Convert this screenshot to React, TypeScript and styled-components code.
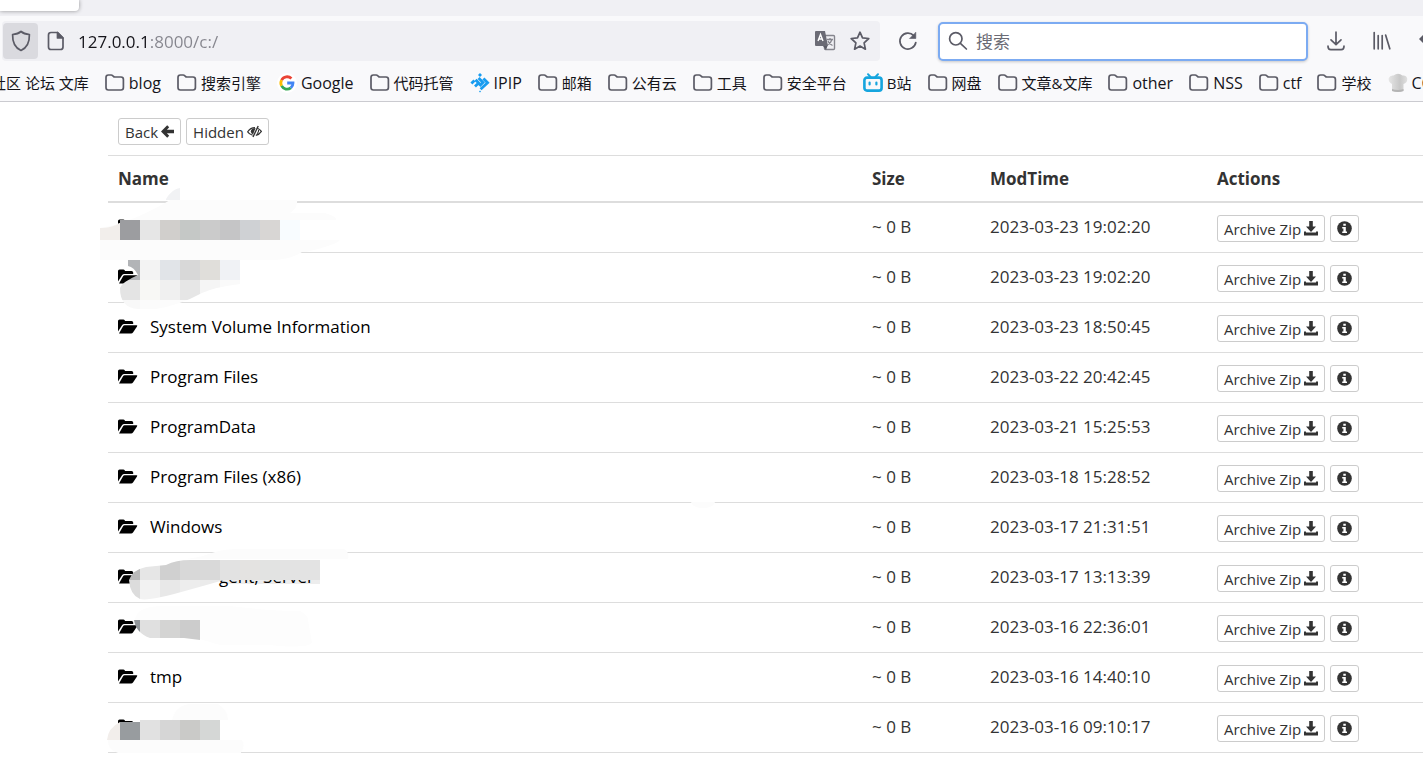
import React from 'react';
import styled, { createGlobalStyle } from 'styled-components';

const GlobalStyle = createGlobalStyle`
  * { box-sizing: border-box; }
  body {
    margin: 0;
    background: #fff;
    overflow: hidden;
    font-family: "Open Sans", "Noto Sans CJK SC", sans-serif;
    color: #333;
  }
  button, input { font: inherit; color: inherit; }
  svg { display: block; flex: none; }
`;

/* ---------- browser chrome ---------- */

const TabStrip = styled.div`
  height: 16px;
  background: #f0f0f4;
  overflow: hidden;
`;

const ActiveTab = styled.div`
  width: 79px;
  height: 11px;
  background: #fff;
  border-radius: 0 0 4px 0;
  box-shadow: 0 0 4px rgba(0, 0, 0, 0.4);
`;

const Toolbar = styled.div`
  display: flex;
  align-items: center;
  height: 50px;
  padding-left: 2px;
  background: #f9f9fb;
  overflow: hidden;
  color: #5b5b66;
`;

const AddressBar = styled.div`
  display: flex;
  flex: 1;
  align-items: center;
  height: 40px;
  padding: 0 3px 0 1px;
  border-radius: 4px;
  background: #f0f0f4;
`;

const IconButton = styled.button<{ $width: number; $active?: boolean }>`
  display: flex;
  flex: none;
  align-items: center;
  justify-content: center;
  width: ${(p) => p.$width}px;
  height: 36px;
  padding: 0;
  border: 0;
  border-radius: 4px;
  background: ${(p) => (p.$active ? '#dadadf' : 'transparent')};
`;

const AddressInput = styled.input`
  flex: 1;
  min-width: 0;
  height: 30px;
  margin-left: 4px;
  padding: 0;
  border: 0;
  outline: 0;
  font-size: 17px;
  background: linear-gradient(90deg, #15141a 73px, #85858d 73px);
  background-clip: text;
  -webkit-text-fill-color: transparent;
`;

const SearchBox = styled.label`
  display: flex;
  flex: none;
  align-items: center;
  gap: 8px;
  width: 370px;
  height: 39px;
  margin-left: 2px;
  padding: 0 8px;
  border: 2px solid #7cabf2;
  border-radius: 5px;
  background: #fff;
  box-shadow: 0 1px 3px rgba(0, 0, 0, 0.2);
`;

const SearchInput = styled.input`
  flex: 1;
  min-width: 0;
  padding: 0;
  border: 0;
  outline: 0;
  background: transparent;
  font-size: 17px;
  &::placeholder { color: #6b6b75; opacity: 1; }
`;

const ToolbarActions = styled.div`
  display: flex;
  flex: none;
  width: 115px;
  padding-left: 5px;
  overflow: hidden;
`;

const BookmarkBar = styled.nav`
  display: flex;
  align-items: center;
  gap: 16px;
  height: 36px;
  padding: 0 0 2px 90px;
  border-bottom: 1px solid #cbcbd0;
  background: #f9f9fb;
  overflow: hidden;
`;

const Bookmark = styled.a<{ $clipped?: boolean; $latin?: boolean }>`
  display: flex;
  flex: none;
  align-items: center;
  gap: 4px;
  margin-left: ${(p) => (p.$clipped ? '-99px' : '0')};
  color: #15141a;
  font-size: ${(p) => (p.$latin ? '16px' : '15px')};
  line-height: 20px;
  text-decoration: none;
  white-space: nowrap;
`;

/* ---------- file listing ---------- */

const Listing = styled.main`
  margin-left: 108px;
`;

const Controls = styled.div`
  display: flex;
  gap: 5px;
  padding: 16px 10px 10px;
  border-bottom: 1px solid #ddd;
`;

const SmallButton = styled.button`
  display: inline-flex;
  align-items: center;
  gap: 3px;
  height: 27px;
  padding: 0 6px;
  border: 1px solid #ccc;
  border-radius: 3px;
  background: #fff;
  font-size: 15px;
  line-height: 20px;
  white-space: nowrap;
`;

const FileTable = styled.table`
  width: 100%;
  table-layout: fixed;
  border-collapse: separate;
  border-spacing: 0;
  font-size: 17px;
  line-height: 24px;
`;

const HeadCell = styled.th<{ $width?: number }>`
  width: ${(p) => (p.$width ? `${p.$width}px` : 'auto')};
  height: 47px;
  padding: 0 10px;
  border-bottom: 2px solid #ddd;
  text-align: left;
  font-weight: 700;
`;

const Cell = styled.td`
  position: relative;
  height: 50px;
  padding: 0 10px 2px;
  border-bottom: 1px solid #ddd;
  white-space: nowrap;
`;

const FileLink = styled.a<{ $indent?: number }>`
  display: flex;
  align-items: center;
  gap: ${(p) => p.$indent ?? 12}px;
  color: #000;
  text-decoration: none;
`;

const RowActions = styled.div`
  display: flex;
  gap: 5px;
  padding-top: 4px;
`;

const Mosaic = styled.svg`
  position: absolute;
  top: 0;
  left: -8px;
  overflow: visible;
  pointer-events: none;
`;

/* ---------- icons ---------- */

const stroke = {
  fill: 'none',
  stroke: '#5b5b66',
  strokeWidth: 1.7,
  strokeLinecap: 'round' as const,
  strokeLinejoin: 'round' as const,
};

const ShieldIcon = () => (
  <svg width="20" height="22" viewBox="0 0 20 22" {...stroke}>
    <path d="M10 1.5 C8 3.3 4.8 4.2 1.6 4.5 C1.4 11 3.5 17.5 10 20.5 C16.5 17.5 18.6 11 18.4 4.5 C15.2 4.2 12 3.3 10 1.5 Z" />
  </svg>
);

const PageIcon = () => (
  <svg width="18" height="20" viewBox="0 0 18 20" {...stroke}>
    <path d="M4 1.5 H10.5 L16 7 V16 Q16 18.5 13.5 18.5 H4 Q1.5 18.5 1.5 16 V4 Q1.5 1.5 4 1.5 Z" />
    <path d="M10.5 1.5 V7 H16 Z" fill="#5b5b66" />
  </svg>
);

const TranslateIcon = () => (
  <svg width="22" height="22" viewBox="0 0 22 22">
    <rect x="10.5" y="5.5" width="10" height="14" rx="1" fill="#f0f0f4" stroke="#85858d" strokeWidth="1.4" />
    <path d="M13 9.5 H19 M16 8 V9.5 M18 9.5 Q17 13 13.5 15 M14 11 Q15 14 18.5 15.5" fill="none" stroke="#85858d" strokeWidth="1.3" />
    <path d="M2 1 H11 L14 16 H2 Q1 16 1 15 V2 Q1 1 2 1 Z" fill="#6b6b75" />
    <path d="M9 16 L12 20 L13.5 16 Z" fill="#5b5b66" />
    <path d="M4 11 L6.5 4.5 L9 11 M5 9 H8" fill="none" stroke="#fff" strokeWidth="1.4" />
  </svg>
);

const StarIcon = () => (
  <svg width="20" height="20" viewBox="0 0 20 20" {...stroke}>
    <path d="M10 1.2 L12.5 6.9 L18.8 7.5 L14.1 11.8 L15.4 18.2 L10 15 L4.6 18.2 L5.9 11.8 L1.2 7.5 L7.5 6.9 Z" />
  </svg>
);

const ReloadIcon = () => (
  <svg width="20" height="20" viewBox="0 0 20 20" {...stroke}>
    <path d="M15.8 4.6 A8 8 0 1 0 17.8 11.5" />
    <path d="M17.8 1.5 V7.5 H11.8 Z" fill="#5b5b66" strokeWidth="0.6" />
  </svg>
);

const SearchIcon = () => (
  <svg width="20" height="20" viewBox="0 0 20 20" {...stroke}>
    <circle cx="7.8" cy="7.8" r="6.2" />
    <path d="M12.4 12.4 L18.4 18" />
  </svg>
);

const DownloadIcon = () => (
  <svg width="18" height="20" viewBox="0 0 18 20" {...stroke}>
    <path d="M9 1.2 V13.5 M4 8.8 L9 13.6 L14 8.8 M1 15.2 Q1 18.6 3.8 18.6 H14.2 Q17 18.6 17 15.2" />
  </svg>
);

const LibraryIcon = () => (
  <svg width="18" height="20" viewBox="0 0 18 20" {...stroke}>
    <path d="M1.2 1.5 V17.8 M5.2 4.5 V17.8 M9.2 4.5 V17.8 M12.6 4 L16.8 17.8" />
  </svg>
);

const MoreIcon = () => (
  <svg width="4" height="16" viewBox="0 0 4 16">
    <path d="M0 6 L4 2 V10 Z" fill="#5b5b66" />
  </svg>
);

const BookmarkFolder = () => (
  <svg width="20" height="18" viewBox="0 0 20 18" {...stroke}>
    <path d="M1 3.4 Q1 1 3.4 1 H6.2 Q7 1 7.6 1.6 L9.2 3 H16 Q18.4 3 18.4 5.4 V13.6 Q18.4 16 16 16 H3.4 Q1 16 1 13.6 Z" />
  </svg>
);

const GoogleIcon = () => (
  <svg width="20" height="20" viewBox="0 0 20 20">
    <circle cx="10" cy="10" r="10" fill="#fff" />
    <g fill="none" strokeWidth="2.8">
      <path d="M14.4 5.6 A6.1 6.1 0 0 0 4.6 7.1" stroke="#ea4335" />
      <path d="M4.6 7.1 A6.1 6.1 0 0 0 4.6 12.9" stroke="#fbbc05" />
      <path d="M4.6 12.9 A6.1 6.1 0 0 0 13.8 14.8" stroke="#34a853" />
      <path d="M13.8 14.8 A6.1 6.1 0 0 0 16 10 H10.2" stroke="#4285f4" />
    </g>
  </svg>
);

const IpipIcon = () => (
  <svg width="20" height="20" viewBox="0 0 20 20" fill="#189cf0">
    <path d="M10 0 L12 2 L10 4 L8 2 Z M10 17.6 L11 18.6 L10 19.6 L9 18.6 Z" />
    <path
      d="M1.4 10.6 L4.4 7.6 M5 13.4 L8.6 10 L5.6 6.8 M8.6 5 L13 9.4 L9.4 13 M13.4 5.6 L17.6 9.8 L10.6 16.2"
      fill="none"
      stroke="#189cf0"
      strokeWidth="2.8"
    />
  </svg>
);

const BiliIcon = () => (
  <svg width="20" height="20" viewBox="0 0 20 20" fill="none" stroke="#16a5de" strokeLinecap="round">
    <path d="M5 1.2 L7.5 4 M15 1.2 L12.5 4" strokeWidth="2" />
    <rect x="1.4" y="4.6" width="17.2" height="13" rx="2.6" strokeWidth="2.6" />
    <path d="M6.6 9.6 V11.4 M13.4 9.6 V11.4" strokeWidth="2.2" />
  </svg>
);

const ChefIcon = () => (
  <svg width="20" height="20" viewBox="0 0 20 20">
    <defs>
      <linearGradient id="hat">
        <stop offset="0" stopColor="#e6e6e6" />
        <stop offset="0.6" stopColor="#c8c8c8" />
        <stop offset="1" stopColor="#e0e0e0" />
      </linearGradient>
    </defs>
    <path d="M4 18 V11 Q0 9 .8 5 Q2 2 5.5 2.5 Q10 -1 14.5 2.5 Q18.5 2 19.2 5.5 Q19.6 10 15.5 11 V18 Q10 20 4 18 Z" fill="url(#hat)" />
    <path d="M4 16 Q10 18 15.5 16 V18 Q10 20 4 18 Z" fill="#b4b4b4" />
  </svg>
);

const ArrowLeftIcon = () => (
  <svg width="13" height="13" viewBox="0 0 13 13" fill="#333">
    <path d="M0 6.5 L6.2 .3 L8.2 2.3 L5.9 4.8 H13 V8.2 H5.9 L8.2 10.7 L6.2 12.7 Z" />
  </svg>
);

const EyeCloseIcon = () => (
  <svg width="15" height="13" viewBox="0 0 15 13" fill="none" stroke="#333">
    <path d="M5.6 10.2 Q2.3 9.2 .7 6.8 Q3.4 2.6 8 2.6 M10.4 3.2 Q13 4.4 14.4 6.4 Q12.4 9.6 8.8 10.4" strokeWidth="1.2" />
    <path d="M8.6 3 Q4 3.2 3.8 6.4 Q3.9 8.4 6 9.4 Z" fill="#333" stroke="none" />
    <path d="M11.2 1 L6 12" strokeWidth="1.4" />
    <path d="M11.6 5 Q11.8 7.4 10 8.8" strokeWidth="1.1" />
  </svg>
);

const SaveIcon = () => (
  <svg width="14" height="15" viewBox="0 0 14 15" fill="#333">
    <path d="M5.2 0 H8.8 V5.6 H12 L7 11 L2 5.6 H5.2 Z" />
    <path d="M0 10.4 H2 V11.6 H12 V10.4 H14 V14.6 H0 Z" />
  </svg>
);

const InfoIcon = () => (
  <svg width="15" height="15" viewBox="0 0 15 15">
    <circle cx="7.5" cy="7.5" r="7.3" fill="#333" />
    <path d="M6.3 2.8 H8.8 V4.8 H6.3 Z M5.2 6 H8.8 V10.4 H10 V12 H5.2 V10.4 H6.4 V7.5 H5.2 Z" fill="#fff" />
  </svg>
);

const FolderOpenIcon = () => (
  <svg width="20" height="15" viewBox="0 0 20 15" fill="#000">
    <path d="M0 12.6 V2 Q0 .4 1.6 .4 H5.4 Q7 .4 7 2 H13.6 Q15.2 2 15.2 3.6 V5 H6.2 Q5 5 4.2 6 Z" />
    <path d="M1 14.4 L5.2 7 Q5.7 6.2 6.6 6.2 H18.6 Q19.8 6.2 19 7.4 L15 13.4 Q14.3 14.4 13.2 14.4 Z" />
  </svg>
);

/* ---------- censored names ---------- */

const Tiles = ({ x, y, h, colors }: { x: number; y: number; h: number; colors: string[] }) => (
  <>
    {colors.map((c, i) => (
      <rect key={i} x={x + i * 20} y={y} width="20" height={h} fill={c} shapeRendering="crispEdges" />
    ))}
  </>
);

const masks: Record<string, React.ReactNode> = {
  first: (
    <>
      <path d="M66 -4 Q72 -14 80 -15 V-3 H66 Z" fill="#f1f2f4" />
      <path d="M0 25 Q30 20 65 0 L70 -3 H197 Q198 5 190 10 H225 Q238 14 236 17 H200 V37 H240 Q236 42 206 49 H202 Q190 57 170 57 H0 Z" fill="#fcfcfc" />
      <path d="M0 37 V25 Q12 25 20 20 V37 Z" fill="#f2eeeb" />
      <Tiles x={20} y={17} h={20} colors={['#9c9da0', '#e6e6e6', '#d1cfcc', '#c5c8c6', '#cbcbcb', '#c5c5c6', '#cfd1d4', '#d8d6d4', '#f8fcff']} />
    </>
  ),
  second: (
    <>
      <clipPath id="second">
        <path d="M28 7 H140 V31 Q115 34 102 40 Q80 52 56 56 H38 Q20 55 20 35 Q22 29 38 22 Q34 14 28 13 Z" />
      </clipPath>
      <g clipPath="url(#second)">
        <Tiles x={20} y={7} h={20} colors={['#b2b4b7', '#f3f3f3', '#e1e4e8', '#d8d8d8', '#e0deda', '#f0f2f5']} />
        <Tiles x={20} y={27} h={20} colors={['#e4e4e4', '#f8f8f5', '#f0f0f0', '#e6e6e6', '#f5f5f5', '#fafafa']} />
        <Tiles x={20} y={47} h={10} colors={['#f8f8f8', '#fbfbfb', '#fcfcfc', '#fcfcfc']} />
      </g>
    </>
  ),
  smudge: <path d="M591 49 H615 Q613 55 603 55 Q593 55 591 49 Z" fill="#fcfcfc" />,
  agent: (
    <>
      <path d="M112 0 Q122 -4 140 -4 H244 Q250 0 248 6 H80 Q96 6 112 0 Z" fill="#fcfcfc" />
      <clipPath id="agent">
        <path d="M29 27 Q32 17 46 14 L66 12 Q76 7 90 7 H220 V27 H124 Q96 35 74 41 Q48 48 40 46 Q30 42 29 27 Z" />
      </clipPath>
      <g clipPath="url(#agent)">
        <Tiles x={20} y={7} h={20} colors={['#b9b9b9', '#e6e6e6', '#d0d0d0', '#d8d8d8', '#d9d9d9', '#e2e2e2', '#e4e3e1', '#e2e3e2', '#e3e3e3', '#e3e3e3']} />
        <Tiles x={20} y={27} h={20} colors={['#dcdcdc', '#f2f2f2', '#e8e8e8', '#ededed', '#ebebeb', '#ededed']} />
      </g>
      <rect x="120" y="27" width="100" height="4" fill="#000" fillOpacity="0.07" />
    </>
  ),
  short: (
    <>
      <path d="M35 17 Q36 4 60 3 H130 Q170 8 200 8 Q208 12 208 17 L212 40 Q205 46 170 42 H120 Z" fill="#fdfdfd" />
      <clipPath id="short">
        <path d="M34 17 H100 V37 L84 35 H50 Q36 30 34 17 Z" />
      </clipPath>
      <g clipPath="url(#short)">
        <Tiles x={20} y={17} h={20} colors={['#91969a', '#e0e0e0', '#d4d4d3', '#cccccc']} />
      </g>
    </>
  ),
  last: (
    <>
      <path d="M8 37 H142 Q146 44 140 51 H130 Q90 54 60 50 H18 Q7 46 8 37 Z M72 17 Q76 2 90 1 H118 Q128 7 128 17 Z" fill="#fcfcfc" />
      <path d="M7 37 Q8 25 20 19 V37 Z" fill="#f2eeeb" />
      <rect x="20" y="19" width="20" height="18" fill="#989c9f" />
      <Tiles x={40} y={17} h={20} colors={['#e1e1e1', '#d6d6d6', '#cacac8', '#d5d7d6']} />
    </>
  ),
};

/* ---------- data ---------- */

const bookmarks: { label: string; icon?: React.ReactNode; clipped?: boolean; latin?: boolean }[] = [
  { label: '社区 论坛 文库', icon: null, clipped: true },
  { label: 'blog', latin: true },
  { label: '搜索引擎' },
  { label: 'Google', icon: <GoogleIcon />, latin: true },
  { label: '代码托管' },
  { label: 'IPIP', icon: <IpipIcon />, latin: true },
  { label: '邮箱' },
  { label: '公有云' },
  { label: '工具' },
  { label: '安全平台' },
  { label: 'B站', icon: <BiliIcon /> },
  { label: '网盘' },
  { label: '文章&文库' },
  { label: 'other', latin: true },
  { label: 'NSS', latin: true },
  { label: 'ctf', latin: true },
  { label: '学校' },
  { label: 'CC', icon: <ChefIcon />, latin: true },
];

const files: { name: string; time: string; mask?: string; indent?: number }[] = [
  { name: '', time: '2023-03-23 19:02:20', mask: 'first' },
  { name: '', time: '2023-03-23 19:02:20', mask: 'second' },
  { name: 'System Volume Information', time: '2023-03-23 18:50:45' },
  { name: 'Program Files', time: '2023-03-22 20:42:45' },
  { name: 'ProgramData', time: '2023-03-21 15:25:53' },
  { name: 'Program Files (x86)', time: '2023-03-18 15:28:52', mask: 'smudge' },
  { name: 'Windows', time: '2023-03-17 21:31:51' },
  { name: 'gent, Server', time: '2023-03-17 13:13:39', mask: 'agent', indent: 81 },
  { name: '', time: '2023-03-16 22:36:01', mask: 'short' },
  { name: 'tmp', time: '2023-03-16 14:40:10' },
  { name: '', time: '2023-03-16 09:10:17', mask: 'last' },
];

export default function App() {
  return (
    <>
      <GlobalStyle />
      <header>
        <TabStrip>
          <ActiveTab />
        </TabStrip>
        <Toolbar>
          <AddressBar>
            <IconButton $width={35} $active aria-label="Tracking protection"><ShieldIcon /></IconButton>
            <IconButton $width={36} aria-label="Site information"><PageIcon /></IconButton>
            <AddressInput aria-label="Address" defaultValue="127.0.0.1:8000/c:/" />
            <IconButton $width={36} aria-label="Translate page"><TranslateIcon /></IconButton>
            <IconButton $width={34} aria-label="Bookmark page"><StarIcon /></IconButton>
          </AddressBar>
          <IconButton $width={56} aria-label="Reload"><ReloadIcon /></IconButton>
          <SearchBox>
            <SearchIcon />
            <SearchInput aria-label="搜索" placeholder="搜索" />
          </SearchBox>
          <ToolbarActions>
            <IconButton $width={46} aria-label="Downloads"><DownloadIcon /></IconButton>
            <IconButton $width={46} aria-label="Library"><LibraryIcon /></IconButton>
            <IconButton $width={32} aria-label="More tools"><MoreIcon /></IconButton>
          </ToolbarActions>
        </Toolbar>
        <BookmarkBar aria-label="Bookmarks">
          {bookmarks.map((b) => (
            <Bookmark key={b.label} href="#" $clipped={b.clipped} $latin={b.latin}>
              {b.icon === undefined ? <BookmarkFolder /> : b.icon}
              {b.label}
            </Bookmark>
          ))}
        </BookmarkBar>
      </header>
      <Listing>
        <Controls>
          <SmallButton>Back <ArrowLeftIcon /></SmallButton>
          <SmallButton>Hidden <EyeCloseIcon /></SmallButton>
        </Controls>
        <FileTable>
          <thead>
            <tr>
              <HeadCell>Name</HeadCell>
              <HeadCell $width={118}>Size</HeadCell>
              <HeadCell $width={227}>ModTime</HeadCell>
              <HeadCell $width={216}>Actions</HeadCell>
            </tr>
          </thead>
          <tbody>
            {files.map((f, i) => (
              <tr key={i}>
                <Cell>
                  <FileLink href="#" $indent={f.indent} aria-label={f.name || 'Folder'}>
                    <FolderOpenIcon />
                    {f.name}
                  </FileLink>
                  {f.mask && <Mosaic width="250" height="50" aria-hidden>{masks[f.mask]}</Mosaic>}
                </Cell>
                <Cell>~ 0 B</Cell>
                <Cell>{f.time}</Cell>
                <Cell>
                  <RowActions>
                    <SmallButton>Archive Zip <SaveIcon /></SmallButton>
                    <SmallButton aria-label="Info"><InfoIcon /></SmallButton>
                  </RowActions>
                </Cell>
              </tr>
            ))}
          </tbody>
        </FileTable>
      </Listing>
    </>
  );
}
